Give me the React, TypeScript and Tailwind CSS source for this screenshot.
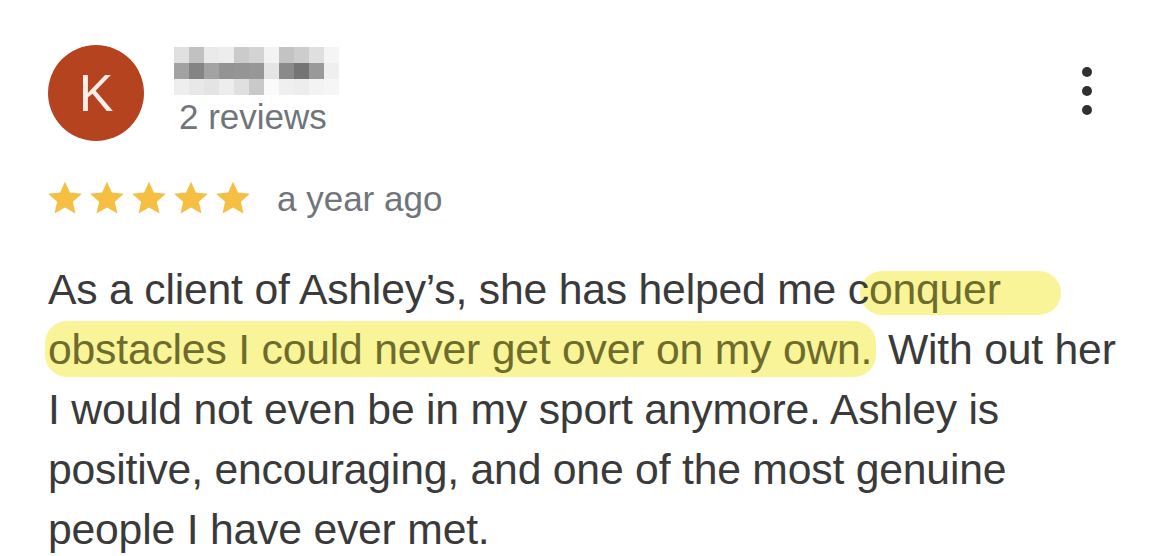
import React from "react"

const Star = () => (
  <svg viewBox="0 0 24 24" className="w-[40px] h-[40px]" fill="#f4bf42">
    <path d="M12 2.2l2.95 6.55 7.15.72-5.37 4.8 1.55 7.03L12 17.66 5.72 21.3l1.55-7.03L1.9 9.47l7.15-.72z" />
  </svg>
)

export default function App() {
  return (
    <div className="w-[1170px] h-[556px] bg-white overflow-hidden relative isolate" style={{ fontFamily: '"Liberation Sans", Arial, sans-serif' }}>
      <div className="pl-[48px] pr-[40px] pt-[45px]">
        {/* header */}
        <div className="flex items-start">
          <div className="w-[96px] h-[96px] rounded-full bg-[#b5431f] flex items-center justify-center text-[#fbeee8] text-[52px] leading-none font-light">
            K
          </div>
          <div className="ml-[30px] pt-[2px] flex flex-col">
            {/* blurred name */}
            <div className="grid grid-cols-[repeat(12,15px)] grid-rows-[16px_16px_16px] w-[180px] opacity-90">
              {[
                "#ddd", "#bbb", "#e8e8e8", "#ececec", "#c6c6c6", "#cfcfcf", "#f2f2f2", "#bdbdbd", "#c8c8c8", "#dcdcdc", "#f4f4f4", "#fff",
                "#999", "#777", "#9a9a9a", "#888", "#8a8a8a", "#8c8c8c", "#e3e3e3", "#7e7e7e", "#666", "#8f8f8f", "#eee", "#fff",
                "#ededed", "#e6e6e6", "#e2e2e2", "#ececec", "#ddd", "#c4c4c4", "#fafafa", "#eee", "#ececec", "#f2f2f2", "#f6f6f6", "#fff",
              ].map((c, i) => (
                <div key={i} style={{ background: c }} />
              ))}
            </div>
            <span className="text-[35px] leading-none text-[#70757a] mt-[4px] ml-[5px]">2 reviews</span>
          </div>
          <div className="ml-auto mr-[38px] mt-[22px] flex flex-col gap-[9px]">
            <span className="w-[10px] h-[10px] rounded-full bg-[#303030]" />
            <span className="w-[10px] h-[10px] rounded-full bg-[#303030]" />
            <span className="w-[10px] h-[10px] rounded-full bg-[#303030]" />
          </div>
        </div>

        {/* rating */}
        <div className="flex items-center mt-[37px]">
          <div className="flex gap-[2px] -ml-[3px]">
            <Star />
            <Star />
            <Star />
            <Star />
            <Star />
          </div>
          <span className="ml-[24px] text-[35px] text-[#70757a] leading-none">a year ago</span>
        </div>

        {/* body */}
        <p className="mt-[41px] text-[42.7px] leading-[60px] text-[#3a3a3a] tracking-[-0.2px]">
          As a client of Ashley’s, she has helped me c
          <span className="relative text-[#6e6c2c]">
            <span className="absolute -left-[9px] -right-[60px] top-[6px] -bottom-[2px] rounded-full bg-[#f8f497] -z-10" />
            onquer
          </span>
          <br />
          <span className="bg-[#f8f497] text-[#6e6c2c] rounded-[22px] pl-[3px] -ml-[3px] pr-[4px] py-[4px]">
            obstacles I could never get over on my own.
          </span>{" "}
          With out her
          <br />
          I would not even be in my sport anymore. Ashley is
          <br />
          positive, encouraging, and one of the most genuine
          <br />
          people I have ever met.
        </p>
      </div>
    </div>
  )
}
